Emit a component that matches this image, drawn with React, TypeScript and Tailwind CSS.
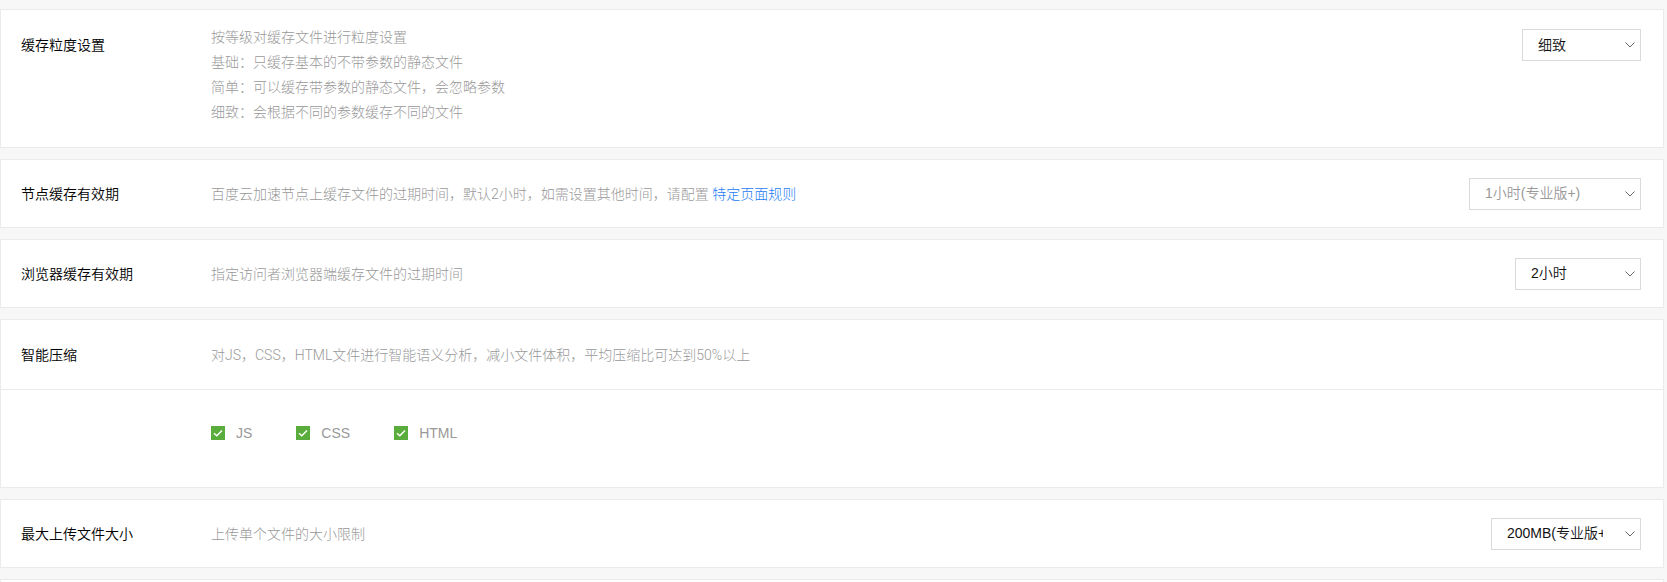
import type { ReactNode } from 'react';

const Chevron = () => (
  <svg width="10" height="6" viewBox="0 0 10 6" fill="none">
    <path d="M0.5 0.5 L5 5 L9.5 0.5" stroke="#666" strokeWidth="1" />
  </svg>
);

const Select = ({ value, width, muted }: { value: string; width: string; muted?: boolean }) => (
  <div className={`${width} flex h-[32px] shrink-0 items-center border border-[#dadada] bg-white`}>
    <span
      className={`min-w-0 flex-1 overflow-hidden whitespace-nowrap pl-[15px] text-[14px] ${
        muted ? 'text-[#999]' : 'text-[#111]'
      }`}
    >
      {value}
    </span>
    <div className="flex w-[37px] shrink-0 justify-end pr-[5px]">
      <Chevron />
    </div>
  </div>
);

const Checkbox = ({ label }: { label: string }) => (
  <div className="flex items-center gap-[11px]">
    <svg width="14" height="14" viewBox="0 0 14 14">
      <rect width="14" height="14" fill="#5aad3d" />
      <path d="M3 7.2 L5.8 9.8 L11 4.4" stroke="#fff" strokeWidth="1.4" fill="none" />
    </svg>
    <span className="text-[14px] leading-[14px] text-[#999]">{label}</span>
  </div>
);

// description text: light CJK with a light latin face so the weights agree
const desc = "text-[14px] text-[#999] font-light [font-family:'Roboto','Noto_Sans_CJK_SC',sans-serif]";
const lbl = 'w-[190px] shrink-0 text-[14px] text-black font-[350]';

const Row = ({ label, children, select }: { label: string; children: ReactNode; select?: ReactNode }) => (
  <div className="flex h-[67px] items-center pl-[20px] pr-[22px]">
    <div className={`${lbl} pt-[2px]`}>{label}</div>
    <div className={`flex-1 pt-[2px] ${desc}`}>{children}</div>
    {select}
  </div>
);

export default function App() {
  return (
    <div className="min-h-screen bg-[#f7f7f7] pt-[9px] font-[350] [font-family:'Liberation_Sans','Noto_Sans_CJK_SC',sans-serif]">
      <div className="flex w-[1664px] flex-col gap-[11px]">
        <div className="flex items-start border border-[#ebebeb] bg-white pb-[22px] pl-[20px] pr-[22px] pt-[15px]">
          <div className={`${lbl} mt-[8px] leading-[25px]`}>缓存粒度设置</div>
          <div className={`flex-1 leading-[25px] ${desc}`}>
            <div>按等级对缓存文件进行粒度设置</div>
            <div>基础：只缓存基本的不带参数的静态文件</div>
            <div>简单：可以缓存带参数的静态文件，会忽略参数</div>
            <div>细致：会根据不同的参数缓存不同的文件</div>
          </div>
          <div className="mt-[4px]">
            <Select value="细致" width="w-[119px]" />
          </div>
        </div>

        <div className="border border-[#ebebeb] bg-white">
          <Row label="节点缓存有效期" select={<Select value="1小时(专业版+)" width="w-[172px]" muted />}>
            百度云加速节点上缓存文件的过期时间，默认2小时，如需设置其他时间，请配置{' '}
            <span className="text-[#1d7cf2]">特定页面规则</span>
          </Row>
        </div>

        <div className="border border-[#ebebeb] bg-white">
          <Row label="浏览器缓存有效期" select={<Select value="2小时" width="w-[126px]" />}>
            指定访问者浏览器端缓存文件的过期时间
          </Row>
        </div>

        <div className="border border-[#ebebeb] bg-white">
          <div className="flex h-[70px] items-center border-b border-[#ebebeb] pl-[20px] pr-[22px]">
            <div className={`${lbl} pt-[2px]`}>智能压缩</div>
            <div className={`flex-1 pt-[2px] ${desc}`}>
              对JS，CSS，HTML文件进行智能语义分析，减小文件体积，平均压缩比可达到50%以上
            </div>
          </div>
          <div className="h-[97px] pl-[210px] pt-[36px]">
            <div className="flex gap-[44px]">
              <Checkbox label="JS" />
              <Checkbox label="CSS" />
              <Checkbox label="HTML" />
            </div>
          </div>
        </div>

        <div className="border border-[#ebebeb] bg-white">
          <Row label="最大上传文件大小" select={<Select value="200MB(专业版+)" width="w-[150px]" />}>
            上传单个文件的大小限制
          </Row>
        </div>

        <div className="h-[40px] border border-[#ebebeb] bg-white" />
      </div>
    </div>
  );
}
